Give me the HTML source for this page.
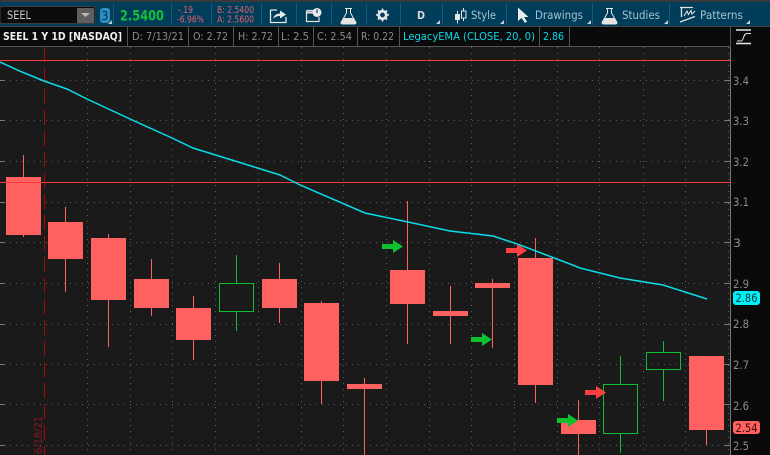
<!DOCTYPE html>
<html><head><meta charset="utf-8"><style>
html,body{margin:0;padding:0;background:#000;width:770px;height:455px;overflow:hidden}
svg{display:block}
text{font-family:"DejaVu Sans","Liberation Sans",sans-serif;font-size:11px}
.tb{font-size:11.5px;fill:#a4c2d2}
.q{font-size:9.5px;fill:#e0606c}
.ax{font-size:11.5px;fill:#8c8c8c}
</style></head><body>
<svg width="770" height="455" viewBox="0 0 770 455" xmlns="http://www.w3.org/2000/svg">
<rect width="770" height="455" fill="#0a0a0a"/>
<rect y="0" width="770" height="2" fill="#3a3a3a"/>
<rect y="2" width="770" height="24" fill="#003d5b"/>
<rect y="26" width="770" height="1" fill="#444"/>
<!-- chart bg -->
<rect x="0" y="47" width="730" height="408" fill="#1a1a1a"/>
<rect x="730" y="47" width="1" height="408" fill="#777"/>
<!-- toolbar seps -->
<g stroke="#1a5a7a" stroke-width="1">
<path d="M113.500 4V25M171.500 4V25M211.500 4V25M261.500 4V25M296.500 4V25M331.500 4V25M366.500 4V25M400.500 4V25M442.500 4V25M506.500 4V25M592.500 4V25M669.500 4V25"/>
</g>
<!-- symbol box -->
<rect x="0" y="6.500" width="95" height="17" rx="2" fill="#0c0c0c" stroke="#3c3c3c"/>
<text x="7" y="19" style="fill:#c8c8c8;font-size:11.500px" textLength="24" lengthAdjust="spacingAndGlyphs">SEEL</text>
<rect x="77" y="8" width="17" height="15" rx="1" fill="#5e5e5e"/>
<path d="M81 13h9l-4.500 4z" fill="#b8b8b8"/>
<rect x="100" y="8" width="10" height="15" rx="3" fill="#2b8fc4"/>
<text x="101.500" y="20" style="fill:#0a2a40;font-size:12.500px" textLength="7" lengthAdjust="spacingAndGlyphs">3</text>
<path d="M108 24h4v-4z" fill="#b8c8d0"/>
<text x="120" y="20.500" fill="#15c038" style="font-size:14px;font-weight:bold" textLength="44" lengthAdjust="spacingAndGlyphs">2.5400</text>
<text class="q" x="178" y="13" textLength="15" lengthAdjust="spacingAndGlyphs">-.19</text>
<text class="q" x="177" y="22.500" textLength="27" lengthAdjust="spacingAndGlyphs">-6.96%</text>
<text class="q" x="217" y="13" textLength="37" lengthAdjust="spacingAndGlyphs">B: 2.5400</text>
<text class="q" x="217" y="22.500" textLength="37" lengthAdjust="spacingAndGlyphs">A: 2.5600</text>
<!-- share icon -->
<path d="M270.500 10H277M286 17V22.500H270.500V10" fill="none" stroke="#e8e8e8" stroke-width="1.300"/>
<path d="M273 19C274 15 277 13.500 280 13.500V10.500L286 14.500 280 18.500V16C277 16 275 17 273 19Z" fill="#e8e8e8"/>
<!-- calendar/clock icon -->
<path d="M306.500 10.500H314M306.500 10.500V21.500H319V17" fill="none" stroke="#e0e0e0" stroke-width="1.200"/>
<path d="M306.500 12.500H313" stroke="#e0e0e0" stroke-width="2"/>
<circle cx="317" cy="12.500" r="4.500" fill="#e8e8e8"/>
<path d="M317 9.500V13" stroke="#003d5b" stroke-width="1.200"/>
<!-- flask -->
<path d="M345 8.500H352M346.500 8.500V13L341 22.500Q341 24 343 24H354Q356 24 356 22.500L350.500 13V8.500" fill="none" stroke="#e4e4e4" stroke-width="1"/>
<path d="M344 18H353L356 22.500Q356 24 354 24H343Q341 24 341 22.500Z" fill="#e4e4e4"/>
<!-- gear -->
<circle cx="382.500" cy="15" r="4" fill="none" stroke="#e8e8e8" stroke-width="2.200"/>
<path d="M382.500 8.500V21.500M376 15H389M378 10.500L387 19.500M387 10.500L378 19.500" stroke="#e8e8e8" stroke-width="1.600"/>
<circle cx="382.500" cy="15" r="2.300" fill="#003d5b"/>
<text x="417" y="19" style="fill:#d8d8d8;font-size:10.500px;font-weight:bold" textLength="8" lengthAdjust="spacingAndGlyphs">D</text>
<path d="M436 24h4v-4z" fill="#c0ccd2"/>
<!-- style candles -->
<path d="M457.500 11V23.500M463.500 8V21" stroke="#e4e4e4" stroke-width="1"/>
<rect x="455" y="14" width="5" height="6" fill="#e4e4e4"/>
<rect x="461.500" y="11" width="4.500" height="7" fill="#003d5b" stroke="#e4e4e4"/>
<text class="tb" x="471" y="19" textLength="25" lengthAdjust="spacingAndGlyphs">Style</text>
<path d="M500 24h4v-4z" fill="#c0ccd2"/>
<!-- cursor -->
<path d="M518 7.500V21L521.500 18 525 23 527 21.500 524 17H528.500Z" fill="#ececec"/>
<text class="tb" x="535" y="19" textLength="48" lengthAdjust="spacingAndGlyphs">Drawings</text>
<path d="M587 24h4v-4z" fill="#c0ccd2"/>
<!-- flask2 -->
<path d="M606 8.500H613M607.500 8.500V13L602 22.500Q602 24 604 24H615Q617 24 617 22.500L611.500 13V8.500" fill="none" stroke="#e4e4e4" stroke-width="1"/>
<path d="M605 18H614L617 22.500Q617 24 615 24H604Q602 24 602 22.500Z" fill="#e4e4e4"/>
<text class="tb" x="622" y="19" textLength="38" lengthAdjust="spacingAndGlyphs">Studies</text>
<path d="M664 24h4v-4z" fill="#c0ccd2"/>
<!-- patterns -->
<path d="M680 7.500H693M681.500 8V17M680 22L695 16.500" stroke="#e4e4e4" stroke-width="1.300" fill="none"/>
<path d="M684 16L687 11 688.500 14.500 691 10.500 692 14 695 11" stroke="#e4e4e4" stroke-width="1" fill="none"/>
<text class="tb" x="700" y="19" textLength="43" lengthAdjust="spacingAndGlyphs">Patterns</text>
<path d="M746 24h4v-4z" fill="#c0ccd2"/>
<!-- info row -->
<rect x="0" y="27" width="730" height="20" fill="#0a0a0a"/>
<path d="M0 46.500H730" stroke="#555"/>
<g stroke="#555"><path d="M127.500 27V47M188.500 27V47M233.500 27V47M278.500 27V47M313.500 27V47M357.500 27V47M399.500 27V47M539.500 27V47M569.500 27V47M730.500 27V47"/></g>
<text x="3" y="40" fill="#f0f0f0" style="font-size:11px;font-weight:bold" textLength="119" lengthAdjust="spacingAndGlyphs">SEEL 1 Y 1D [NASDAQ]</text>
<g fill="#8a8a8a">
<text x="132" y="40" textLength="52" lengthAdjust="spacingAndGlyphs">D: 7/13/21</text>
<text x="193" y="40" textLength="35" lengthAdjust="spacingAndGlyphs">O: 2.72</text>
<text x="238" y="40" textLength="35" lengthAdjust="spacingAndGlyphs">H: 2.72</text>
<text x="281" y="40" textLength="28" lengthAdjust="spacingAndGlyphs">L: 2.5</text>
<text x="317" y="40" textLength="35" lengthAdjust="spacingAndGlyphs">C: 2.54</text>
<text x="361" y="40" textLength="33" lengthAdjust="spacingAndGlyphs">R: 0.22</text>
</g>
<text x="403" y="40" fill="#0fd8e8" textLength="132" lengthAdjust="spacingAndGlyphs">LegacyEMA (CLOSE, 20, 0)</text>
<text x="543" y="40" fill="#0fd8e8" textLength="21" lengthAdjust="spacingAndGlyphs">2.86</text>
<!-- right icon -->
<path d="M736 30H751M736 43.500H751" stroke="#e8e8e8" stroke-width="1.500"/>
<path d="M737 41H741C744 41 743 33.500 747 33.500H751" fill="none" stroke="#e8e8e8" stroke-width="1"/>
<!-- grid -->
<g stroke="#5e5e5e" stroke-width="1" stroke-dasharray="1 5" fill="none">
<path d="M87.500 47V455M130.500 47V455M172.500 47V455M215.500 47V455M258.500 47V455M301.500 47V455M343.500 47V455M386.500 47V455M429.500 47V455M471.500 47V455M514.500 47V455M557.500 47V455M599.500 47V455M643.500 47V455M685.500 47V455M728.500 47V455"/>
<path d="M10 80.500H730M10 120.500H730M10 161.500H730M10 202.500H730M10 242.500H730M10 283.500H730M10 324.500H730M10 364.500H730M10 404.500H730M10 445.500H730"/>
</g>
<g stroke="#7a7a7a" stroke-width="1">
<path d="M0 80.500H5M0 120.500H5M0 161.500H5M0 202.500H5M0 242.500H5M0 283.500H5M0 324.500H5M0 364.500H5M0 404.500H5M0 445.500H5"/>
<path d="M725 80.500H730M725 120.500H730M725 161.500H730M725 202.500H730M725 242.500H730M725 283.500H730M725 324.500H730M725 364.500H730M725 404.500H730M725 445.500H730"/>
</g>
<!-- vertical event line -->
<path d="M44.500 47V455" stroke="#a80808" stroke-width="1" stroke-dasharray="15 6"/>
<text transform="translate(42,454) rotate(-90)" fill="#8a1818" style="font-size:11px" textLength="38" lengthAdjust="spacingAndGlyphs">6/18/21</text>
<!-- wicks -->
<g stroke="#ff6060" stroke-width="1">
<path d="M23.500 155V237M65.500 207V292M108.500 234V347M151.500 259V316M193.500 296V360M279.500 263V323M321.500 301V404M364.500 378V455M407.500 201V344M450.500 286V344M492.500 279V348M535.500 238V403M578.500 400V455M706.500 430V445"/>
</g>
<g stroke="#0ec030" stroke-width="1">
<path d="M236.500 255V283M236.500 311V331M620.500 356V384M620.500 434V453M663.500 341V352M663.500 369V401"/>
</g>
<!-- bodies -->
<g fill="#ff6060">
<rect x="6" y="177" width="35" height="58"/>
<rect x="48" y="222" width="35" height="37"/>
<rect x="91" y="238" width="35" height="62"/>
<rect x="134" y="279" width="35" height="29"/>
<rect x="176" y="308" width="35" height="32"/>
<rect x="262" y="279" width="35" height="29"/>
<rect x="304" y="303" width="35" height="78"/>
<rect x="347" y="384" width="35" height="5"/>
<rect x="390" y="270" width="35" height="34"/>
<rect x="433" y="311" width="35" height="5"/>
<rect x="475" y="283" width="35" height="5"/>
<rect x="518" y="258" width="35" height="127"/>
<rect x="561" y="420" width="35" height="14"/>
<rect x="689" y="356" width="35" height="74"/>
</g>
<g fill="none" stroke="#0ec030">
<rect x="219.500" y="283.500" width="34" height="28"/>
<rect x="603.500" y="384.500" width="34" height="49"/>
<rect x="646.500" y="352.500" width="34" height="17"/>
</g>
<!-- horizontal red lines -->
<path d="M0 60.500H730M0 182.500H730" stroke="#f23a3a" stroke-width="1"/>
<!-- EMA -->
<polyline points="0,62 22,72 44,81 67,89 87,99 130,119 172,138 193,148 235,161 280,175 300,185 365,213 408,222 450,231 493,236 520,245 570,264 580,268 620,278 663,285 707,299" fill="none" stroke="#08dce8" stroke-width="1.500"/>
<!-- arrows -->
<g fill="#0ec030">
<path d="M382 244H393V240L403 246.500 393 253V249H382Z"/>
<path d="M471 337H482V333L492 339.500 482 346V342H471Z"/>
<path d="M557 418H568V414L578 420.500 568 427V423H557Z"/>
</g>
<g fill="#ff4040">
<path d="M506 248H517V244L527 250.500 517 257V253H506Z"/>
<path d="M585 390H596V386L606 392.500 596 399V395H585Z"/>
</g>
<!-- axis labels -->
<text class="ax" x="733" y="85" textLength="16" lengthAdjust="spacingAndGlyphs">3.4</text>
<text class="ax" x="733" y="125" textLength="16" lengthAdjust="spacingAndGlyphs">3.3</text>
<text class="ax" x="733" y="166" textLength="16" lengthAdjust="spacingAndGlyphs">3.2</text>
<text class="ax" x="733" y="206" textLength="16" lengthAdjust="spacingAndGlyphs">3.1</text>
<text class="ax" x="733" y="247" textLength="8" lengthAdjust="spacingAndGlyphs">3</text>
<text class="ax" x="733" y="288" textLength="16" lengthAdjust="spacingAndGlyphs">2.9</text>
<text class="ax" x="733" y="328" textLength="16" lengthAdjust="spacingAndGlyphs">2.8</text>
<text class="ax" x="733" y="369" textLength="16" lengthAdjust="spacingAndGlyphs">2.7</text>
<text class="ax" x="733" y="410" textLength="16" lengthAdjust="spacingAndGlyphs">2.6</text>
<text class="ax" x="733" y="450" textLength="16" lengthAdjust="spacingAndGlyphs">2.5</text>
<rect x="733" y="291" width="27" height="14" rx="3" fill="#00f0f8"/>
<text x="735.500" y="302" fill="#06343a" style="font-size:11.500px" textLength="22" lengthAdjust="spacingAndGlyphs">2.86</text>
<rect x="733" y="421" width="27" height="13" rx="3" fill="#ff6060"/>
<text x="735.500" y="432" fill="#3a0a0a" style="font-size:11.500px" textLength="22" lengthAdjust="spacingAndGlyphs">2.54</text>
</svg>
</body></html>
